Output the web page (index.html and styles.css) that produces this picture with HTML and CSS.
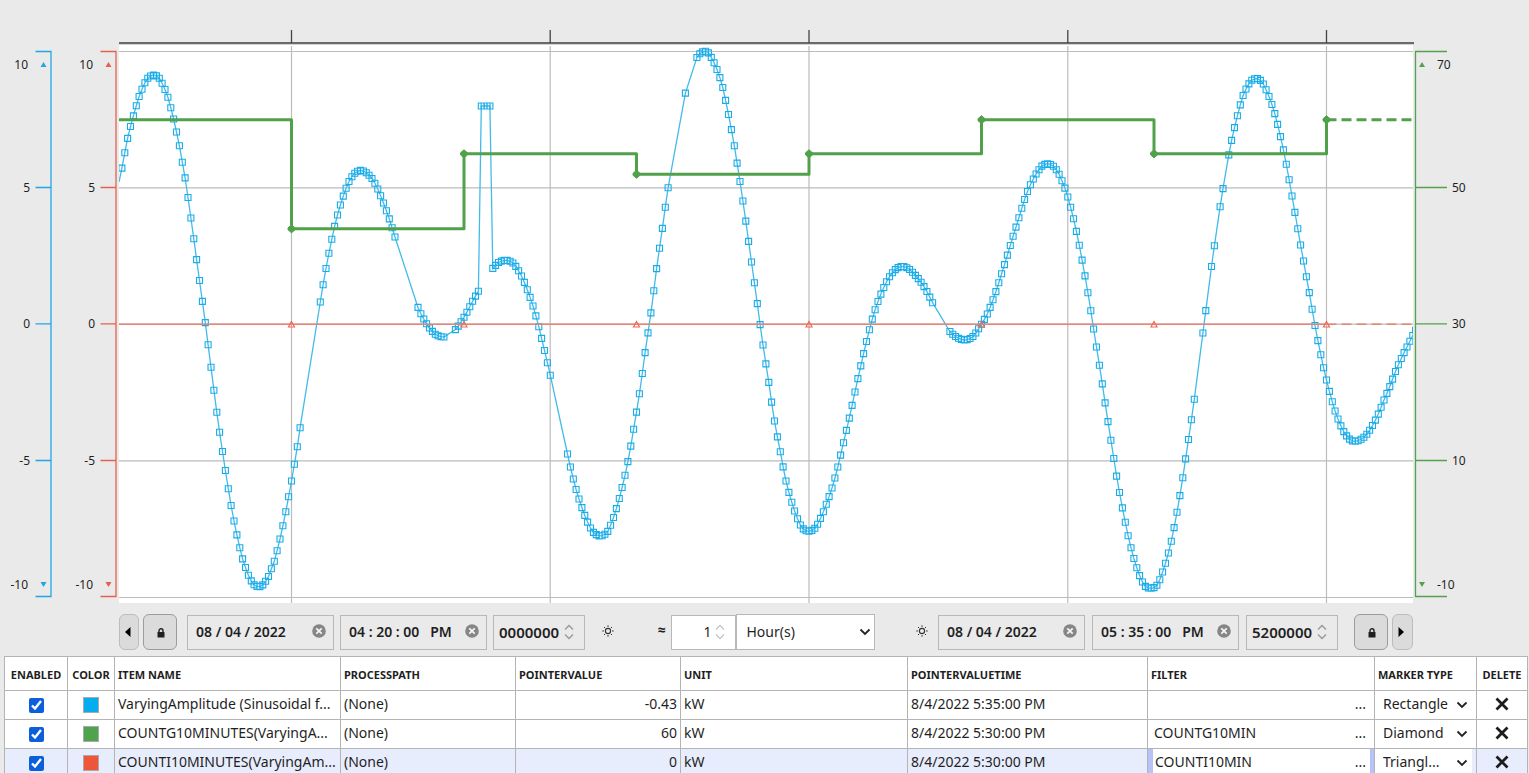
FILE: index.html
```html
<!DOCTYPE html>
<html lang="en">
<head>
<meta charset="utf-8">
<title>Trend</title>
<link rel="stylesheet" href="styles.css">
</head>
<body>
<svg class="defs" width="0" height="0" aria-hidden="true">
  <symbol id="i-lock" viewBox="0 0 8 10"><path d="M2 4.5V2.8a2 2 0 0 1 4 0V4.500" fill="none" stroke="#1f1f1f" stroke-width="1.4"/><rect x=".5" y="4" width="7" height="5.500" rx=".6" fill="#1f1f1f"/></symbol>
  <symbol id="i-clear" viewBox="0 0 14 14"><circle cx="7" cy="7" r="6.800" fill="#868686"/><path d="M4.300 4.300l5.400 5.400M9.700 4.300l-5.400 5.400" stroke="#f4f4f4" stroke-width="1.800"/></symbol>
  <symbol id="i-spin" viewBox="0 0 10 16"><path d="M1 5.500L5 1.500L9 5.500M1 10.500L5 14.500L9 10.500" fill="none" stroke="currentColor" stroke-width="1.500"/></symbol>
  <symbol id="i-sun" viewBox="0 0 12 12"><circle cx="6" cy="6" r="2.600" fill="none" stroke="#333" stroke-width="1.100"/><path d="M6 .3v1.600M6 10.100v1.600M.3 6h1.600M10.100 6h1.600M2 2l1.100 1.100M8.900 8.900L10 10M10 2L8.900 3.100M3.100 8.900L2 10" stroke="#333" stroke-width="1"/></symbol>
  <symbol id="i-down" viewBox="0 0 12 8"><path d="M1.500 1.500L6 6L10.500 1.500" fill="none" stroke="#222" stroke-width="1.800"/></symbol>
  <symbol id="i-x" viewBox="0 0 14 14"><path d="M1.500 1.500l11 11M12.500 1.500l-11 11" stroke="#1c1c1c" stroke-width="2.800"/></symbol>
</svg>
<main class="app">
  <svg class="chart" id="chart" viewBox="0 0 1529 606" role="img" aria-label="Trend chart">
    <defs>
      <clipPath id="plot"><rect x="119" y="45" width="1294" height="558"/></clipPath>
    </defs>
    <rect x="119" y="45" width="1294" height="558" fill="#fff"/>
    <path class="ruler" d="M119 43H1414"/>
    <path class="ruler-shade" d="M119 44.500H1414"/>
    <path class="ruler-tick" d="M291.500 30V43M550.200 30V43M809 30V43M1067.800 30V43M1326.500 30V43"/>
    <path class="grid" d="M119 51.500H1413M119 187.800H1413M119 324.200H1413M119 460.800H1413M119 597.500H1413M291.500 46V603M550.200 46V603M809 46V603M1067.800 46V603M1326.500 46V603"/>
    <g id="series" clip-path="url(#plot)"></g>
    <g class="axis blue">
      <path d="M35.500 51.500H51V596.500H35.500M35.500 187.500H51M35.500 323.800H51M35.500 460.500H51"/>
      <path class="mark" d="M43.500 62l3 5h-6zM43.500 587l3-5h-6z"/>
      <g text-anchor="end"><text x="28" y="69">10</text><text x="30" y="192">5</text><text x="30" y="328">0</text><text x="30" y="465">-5</text><text x="28" y="589">-10</text></g>
    </g>
    <g class="axis red">
      <path d="M100.500 51.500H116V596.500H100.500M100.500 187.500H116M100.500 323.800H116M100.500 460.500H116"/>
      <path class="mark" d="M108.500 62l3 5h-6zM108.500 587l3-5h-6z"/>
      <g text-anchor="end"><text x="93" y="69">10</text><text x="95" y="192">5</text><text x="95" y="328">0</text><text x="95" y="465">-5</text><text x="93" y="589">-10</text></g>
    </g>
    <g class="axis green">
      <path d="M1447 51.500H1415.500V596.500H1447M1415.500 187.500H1447M1415.500 323.800H1447M1415.500 460.500H1447"/>
      <path class="mark" d="M1422 62l3 5h-6zM1422 587l3-5h-6z"/>
      <text x="1437" y="69">70</text><text x="1452" y="192">50</text><text x="1452" y="328">30</text><text x="1452" y="465">10</text><text x="1437" y="589">-10</text>
    </g>
  </svg>

  <form class="controls">
    <div class="group start">
      <button type="button" class="btn step" aria-label="Back"><svg width="6" height="10" viewBox="0 0 6 10"><path d="M5.500 0v10L0 5z"/></svg></button>
      <button type="button" class="btn lock" aria-label="Lock start"><svg width="8" height="10"><use href="#i-lock"/></svg></button>
      <span class="field date"><input type="text" aria-label="Start date" value="08 / 04 / 2022"><button type="button" aria-label="Clear start date"><svg width="14" height="14"><use href="#i-clear"/></svg></button></span>
      <span class="field time"><input type="text" aria-label="Start time" value="04 : 20 : 00&nbsp;&nbsp; PM"><button type="button" aria-label="Clear start time"><svg width="14" height="14"><use href="#i-clear"/></svg></button></span>
      <span class="field ticks"><input type="text" aria-label="Start fraction" value="0000000"><svg class="spin" width="10" height="16"><use href="#i-spin"/></svg></span>
    </div>
    <div class="group middle">
      <svg class="sun" width="12" height="12"><use href="#i-sun"/></svg>
      <label class="approx" for="span">≈</label>
      <span class="field count"><input id="span" type="text" value="1"><svg class="spin" width="10" height="16"><use href="#i-spin"/></svg></span>
      <span class="pick unit"><select aria-label="Unit"><option>Hour(s)</option></select><svg width="12" height="8"><use href="#i-down"/></svg></span>
    </div>
    <div class="group">
      <svg class="sun end" width="12" height="12"><use href="#i-sun"/></svg>
      <span class="field date"><input type="text" aria-label="End date" value="08 / 04 / 2022"><button type="button" aria-label="Clear end date"><svg width="14" height="14"><use href="#i-clear"/></svg></button></span>
      <span class="field time"><input type="text" aria-label="End time" value="05 : 35 : 00&nbsp;&nbsp; PM"><button type="button" aria-label="Clear end time"><svg width="14" height="14"><use href="#i-clear"/></svg></button></span>
      <span class="field ticks"><input type="text" aria-label="End fraction" value="5200000"><svg class="spin" width="10" height="16"><use href="#i-spin"/></svg></span>
      <button type="button" class="btn lock end" aria-label="Lock end"><svg width="8" height="10"><use href="#i-lock"/></svg></button>
      <button type="button" class="btn step next" aria-label="Forward"><svg width="6" height="10" viewBox="0 0 6 10"><path d="M.5 0v10L6 5z"/></svg></button>
    </div>
  </form>

  <div class="items">
    <table>
      <colgroup><col class="c-enabled"><col class="c-color"><col class="c-name"><col class="c-path"><col class="c-value"><col class="c-unit"><col class="c-time"><col class="c-filter"><col class="c-marker"><col class="c-delete"></colgroup>
      <thead><tr><th class="mid">ENABLED</th><th class="mid">COLOR</th><th>ITEM NAME</th><th>PROCESSPATH</th><th>POINTERVALUE</th><th>UNIT</th><th>POINTERVALUETIME</th><th>FILTER</th><th>MARKER TYPE</th><th class="mid">DELETE</th></tr></thead>
      <tbody>
        <tr>
          <td class="mid"><input type="checkbox" checked aria-label="Enabled"></td><td class="mid"><button type="button" class="swatch s-blue" aria-label="Blue"></button></td>
          <td>VaryingAmplitude (Sinusoidal f...</td><td>(None)</td><td class="num">-0.43</td><td>kW</td><td>8/4/2022 5:35:00 PM</td>
          <td class="filter"><div><input type="text" aria-label="Filter" value=""><button type="button">...</button></div></td>
          <td class="marker"><span class="pick"><select aria-label="Marker type"><option>Rectangle</option></select><svg width="12" height="8"><use href="#i-down"/></svg></span></td>
          <td class="mid"><button type="button" class="del" aria-label="Delete"><svg width="14" height="14"><use href="#i-x"/></svg></button></td>
        </tr>
        <tr>
          <td class="mid"><input type="checkbox" checked aria-label="Enabled"></td><td class="mid"><button type="button" class="swatch s-green" aria-label="Green"></button></td>
          <td>COUNTG10MINUTES(VaryingA...</td><td>(None)</td><td class="num">60</td><td>kW</td><td>8/4/2022 5:30:00 PM</td>
          <td class="filter"><div><input type="text" aria-label="Filter" value="COUNTG10MIN"><button type="button">...</button></div></td>
          <td class="marker"><span class="pick"><select aria-label="Marker type"><option>Diamond</option></select><svg width="12" height="8"><use href="#i-down"/></svg></span></td>
          <td class="mid"><button type="button" class="del" aria-label="Delete"><svg width="14" height="14"><use href="#i-x"/></svg></button></td>
        </tr>
        <tr class="active">
          <td class="mid"><input type="checkbox" checked aria-label="Enabled"></td><td class="mid"><button type="button" class="swatch s-red" aria-label="Red"></button></td>
          <td>COUNTI10MINUTES(VaryingAm...</td><td>(None)</td><td class="num">0</td><td>kW</td><td>8/4/2022 5:30:00 PM</td>
          <td class="filter"><div><input type="text" aria-label="Filter" value="COUNTI10MIN"><button type="button">...</button></div></td>
          <td class="marker"><span class="pick"><select aria-label="Marker type"><option>Triangl...</option></select><svg width="12" height="8"><use href="#i-down"/></svg></span></td>
          <td class="mid"><button type="button" class="del" aria-label="Delete"><svg width="14" height="14"><use href="#i-x"/></svg></button></td>
        </tr>
      </tbody>
    </table>
  </div>
</main>
<script src="chart.js"></script>
</body>
</html>
```

FILE: styles.css
```css
* { box-sizing: border-box; }
body { margin: 0; background: #eaeaea; color: #1f1f1f; font: 14px/20px "Noto Sans", "Open Sans", sans-serif; }
button, input, select { margin: 0; padding: 0; border: 0; background: none; color: inherit; font: inherit; }
.defs { position: absolute; }
.app { height: 100vh; overflow: hidden; display: flex; flex-direction: column; }

.chart { display: block; width: 100%; flex: none; }
.ruler { stroke: #6b6b6b; stroke-width: 2; }
.ruler-shade { stroke: #d2d2d2; }
.ruler-tick { stroke: #444; stroke-width: 1.3; }
.grid { stroke: #bcbcbc; stroke-width: 1.2; fill: none; }
.axis path { fill: none; stroke: currentColor; stroke-width: 1.3; }
.axis .mark { fill: currentColor; stroke: none; }
.axis text { fill: #1f1f1f; font-size: 12px; }
.blue { color: #22a7e0; }
.red { color: #e5604d; }
.green { color: #55a04d; }
.wave { fill: none; stroke: #42bbe9; stroke-width: 1.3; }
.wave-marks { fill: none; stroke: #19ace8; stroke-width: 1.1; }
.steps { fill: none; stroke: #50a14a; stroke-width: 3; stroke-linejoin: round; }
.diamonds { fill: #50a14a; stroke: #50a14a; stroke-linejoin: round; }
.zero { fill: none; stroke: #e88476; stroke-width: 1.600; }
.triangles { fill: none; stroke: #ee6a57; stroke-width: 1.2; }
.dashed { stroke-dasharray: 10 5; }

.controls { display: flex; justify-content: space-between; align-items: center; height: 50px; padding: 2px 116px 0 119px; flex: none; }
.group { display: flex; align-items: center; gap: 7px; }
.start { gap: 6px; }
.btn { display: flex; align-items: center; justify-content: center; height: 36px; border: 1px solid #bdbdbd; border-radius: 6px; background: #dbdbdb; }
.step { width: 20px; padding-right: 2px; }
.next { width: 21px; }
.lock { width: 34px; margin: 0 4px 0 -2px; padding: 2px 0 0 2px; border-color: #9c9c9c; }
.lock.end { margin: 0 -3px 0 9px; }
.field { display: flex; align-items: center; justify-content: space-between; height: 35px; border: 1px solid #b8b8b8; font-weight: 600; }
.field input { min-width: 0; flex: 1; }
.field button { display: flex; margin-bottom: 2px; }
.date { width: 147px; padding: 0 7px 0 8px; }
.time { width: 147px; padding: 0 7px 0 8px; }
.ticks { width: 92px; padding: 0 10px 0 5px; font-size: 15px; }
.spin { color: #9a9aa2; }
.middle { gap: 0; margin-right: 24px; }
.sun { margin-bottom: 3px; }
.sun.end { margin-right: 3px; }
.approx { margin: 0 5px 5px 43px; font-size: 14px; font-weight: 700; }
.count { width: 65px; padding: 0 10px 0 6px; background: #fff; font-weight: 400; }
.count input { text-align: right; padding-right: 3px; }
.count .spin { color: #c6c6cc; }
.pick { display: grid; align-items: center; }
.pick select, .pick svg { grid-area: 1 / 1; }
.pick select { appearance: none; width: 100%; height: 100%; }
.pick svg { justify-self: end; pointer-events: none; }
.unit { width: 139px; height: 36px; border: 1px solid #b8b8b8; background: #fff; }
.unit select { padding-left: 10px; }
.unit svg { margin-right: 3px; }

.items { flex: 1; min-height: 0; padding: 0 1px 0 4px; overflow: hidden; }
table { width: 100%; table-layout: fixed; border-collapse: collapse; background: #fff; }
th, td { height: 29px; padding: 0 4px 2px 3px; border: 1px solid #b4b4b4; text-align: left; white-space: nowrap; overflow: hidden; }
th { height: 34px; padding-top: 2px; padding-bottom: 0; font-size: 11px; font-weight: 700; }
th.mid, td.mid { padding-left: 0; padding-right: 0; text-align: center; }
td.num { text-align: right; padding-right: 3px; }
td input[type="checkbox"] { width: 15px; height: 15px; vertical-align: middle; accent-color: #0b5fdb; }
.swatch { width: 16px; height: 16px; border: 1px solid #aaa; vertical-align: middle; }
.s-blue { background: #05adef; }
.s-green { background: #4fa34a; }
.s-red { background: #ee5639; }
td.filter, td.marker { padding-top: 0; padding-bottom: 0; }
.filter div { display: flex; align-items: center; justify-content: space-between; height: 28px; padding: 0 4px 2px 3px; }
.filter input { min-width: 0; flex: 1; }
.marker .pick { height: 28px; padding-right: 4px; padding-left: 5px; }
.marker select { padding-bottom: 2px; }
.del { display: inline-flex; vertical-align: middle; margin-bottom: 3px; }
.active { background: #e8edfd; }
.active td.filter { padding: 0; background: #fff; }
.active .filter div { padding: 0 4px 2px 2px; border: solid #b5c3f8; border-width: 0 4px 0 5px; }
.active .marker { background: #fff; box-shadow: inset -4px 0 #e8edfd; }

.c-enabled { width: 63px; }
.c-color { width: 47px; }
.c-name { width: 226px; }
.c-path { width: 175px; }
.c-value { width: 165px; }
.c-unit { width: 227px; }
.c-time { width: 240px; }
.c-filter { width: 227px; }
.c-marker { width: 102px; }
.c-delete { width: 51px; }
```

FILE: chart.js
```js
// Sampled curve as x, y pairs in chart units.
const curve = [
  116,196, 119,182, 122,167.5, 124.7,153, 127.5,139, 130.5,126.5, 133.5,115.5, 136.5,105, 139.3,96, 142.3,88.5, 145,82.5, 148,78, 153.5,75, 159,78,
  162.3,83.5, 165,89.5, 168,97.7, 170.7,107.5, 173.5,118.5, 176.5,132, 179.5,146.5, 182.3,162.5, 185.3,179, 188,197.5, 190.7,216.7, 193.5,237,
  199.3,279, 205.3,323, 211,367.3, 216.5,410.5, 222.5,451.5, 228.3,489, 234,521, 239.7,547.5, 242.5,558.5, 245.5,567.5, 248.3,575, 251.3,581,
  254.5,585, 258.5,586.7, 262,585.5, 265.5,581.5, 268.5,576.5, 271.3,569, 274.5,560.5, 277.3,550, 280,539, 285.7,512, 291.5,481, 297.3,446.5, 300,428.5,
  320.5,300.5, 326,268.5, 331.7,239.5, 337.3,215.7, 343.3,196, 349,181.5, 352,176.5, 355,173, 360.7,170.3, 366.5,173, 372,178.5, 377.5,188.5,
  383.5,203, 389.3,219, 395,237, 417.5,306, 423.5,318.5, 429.5,328, 435,334, 438,335.7, 443.5,337, 449,335, 455.5,329.5, 461,322, 467,312, 472.5,301.5,
  478.5,291, 492.7,268.5, 495.5,265.5, 498.5,262.5, 505,260.3, 511.5,262, 515.5,266, 521.5,276, 527,289, 533,306, 538.7,326.5, 544.3,349.7,
  550.2,375, 567.5,454, 573,478, 579,499, 585,516, 591,529, 594,533, 600,536, 606,533.5, 609,529, 615,513, 622,488, 628,461, 633.5,430,
  639.5,393, 645,353.5, 651,312, 656.5,269.5, 662.5,227.5, 668,188.5, 685.5,92.5, 696.7,58, 699.5,54, 704.5,51.3, 708.5,53, 711,57, 714,62.5,
  717,69.5, 720,78, 723,88.5, 728.5,114.5, 734.3,146, 740,181.5, 745.7,220.7, 751.5,262, 757.3,304, 763,345, 769,384, 774.5,421, 780.5,453,
  786,481, 792,503, 798,520, 801,526, 804,529.5, 809,531.3, 815,528, 820,519.5, 826,505, 832,488, 838,466, 844,440.5, 852,406, 858,378,
  866.5,341.5, 872,320, 878,301.5, 884,287, 890,276, 896,269, 902.5,266.5, 909,269, 915,275, 921,282, 927,291.7, 932.5,302.5,
  949.5,331, 955,336, 958,338, 964.5,340, 971,338, 975,334, 981,325, 987.5,313.5, 993.3,299, 999,282, 1004.7,264, 1010.5,244.7, 1016.5,225.5,
  1022,207.5, 1027.5,191.5, 1033.5,178.5, 1039.5,169, 1042,166, 1047.5,163.7, 1053,166, 1056.5,170, 1059.5,175, 1065,188.5, 1070.7,207.5,
  1076.5,232, 1082.3,261, 1088,293.5, 1093.7,329.5, 1099.5,366, 1105.3,404, 1111,441, 1116.7,476.5, 1122.5,508.5, 1128.3,536.5, 1134,559,
  1137,568.5, 1140,576.5, 1142.5,582, 1145.5,586.5, 1150.5,588.3, 1154.5,587.3, 1157.5,584.5, 1160,579, 1165.5,563.3, 1171.3,541, 1177,512.3,
  1182.7,478, 1188.5,439.5, 1194.5,397.5, 1203,332, 1211.5,266.5, 1220.3,205.7, 1229,153.5, 1235,125.5, 1240.7,103.3, 1243.5,94.5,
  1246.5,88, 1249.5,83, 1252,80, 1257,78.5, 1261,81, 1263.5,84.5, 1269,96.5, 1275,114.5, 1280.7,137.5, 1286.5,165.5, 1292,196, 1297.7,228.5,
  1303.5,261, 1309.5,294, 1315,325.5, 1320.7,354.5, 1326.5,380, 1332.3,402, 1338,419, 1344,432, 1350,439.5, 1355.5,441.3, 1361.5,439,
  1367,434, 1372.5,425.5, 1378.5,413.5, 1384,400, 1390,386, 1395.5,371.5, 1401.5,358, 1407.5,346, 1413,335, 1419,324
];
const gaps = [[301, 319], [396, 416], [445, 454], [552, 566], [669, 684], [687, 695], [934, 948], [1196, 1201], [1207, 1210], [1216, 1219], [1225, 1228]];

const px = i => curve[2 * i];
const py = i => curve[2 * i + 1];
const slope = i => (py(i + 1) - py(i - 1)) / (px(i + 1) - px(i - 1));

// Cubic Hermite interpolation between neighbouring samples.
function valueAt(x) {
  let i = 1;
  while (px(i + 1) < x) i++;
  const h = px(i + 1) - px(i);
  const t = (x - px(i)) / h;
  const last = curve.length / 2 - 1;
  const m0 = slope(i);
  const m1 = i + 2 <= last ? slope(i + 1) : m0;
  const t2 = t * t, t3 = t2 * t;
  return (2 * t3 - 3 * t2 + 1) * py(i) + (t3 - 2 * t2 + t) * h * m0 + (3 * t2 - 2 * t3) * py(i + 1) + (t3 - t2) * h * m1;
}

const tenSeconds = 2.875;
const points = [];
for (let n = -60; n <= 391; n++) {
  const x = 291.5 + n * tenSeconds;
  if (gaps.some(g => x > g[0] && x < g[1])) continue;
  points.push([x, n >= 66 && n <= 69 ? 106 : valueAt(x)]);
}
const wave = 'M' + points.map(p => p[0].toFixed(1) + ' ' + p[1].toFixed(1)).join('L');
const squares = points.slice(1).map(p => `M${(p[0] - 3).toFixed(1)} ${(p[1] - 3).toFixed(1)}h6v6h-6z`).join('');

const levels = [[291.5, 228.8], [464, 153.8], [636.5, 174.3], [809, 153.8], [981.5, 119.7], [1154, 153.8], [1326.5, 119.7]];
const steps = 'M119 119.7' + levels.map(l => `H${l[0]}V${l[1]}`).join('');
const diamonds = levels.map(l => `M${l[0]} ${l[1] - 4}l3.500 3v2l-3.500 3l-3.500 -3v-2z`).join('');
const triangles = levels.map(l => `M${l[0]} 321.5l3 5.500h-6z`).join('');

document.getElementById('series').innerHTML = `
  <path class="wave" d="${wave}"/><path class="wave-marks" d="${squares}"/>
  <path class="steps" d="${steps}"/><path class="steps dashed" d="M1326.5 119.7H1413"/><path class="diamonds" d="${diamonds}"/>
  <path class="zero" d="M119 324.2H1326.5"/><path class="zero dashed" d="M1326.5 324.2H1413"/><path class="triangles" d="${triangles}"/>`;
```
